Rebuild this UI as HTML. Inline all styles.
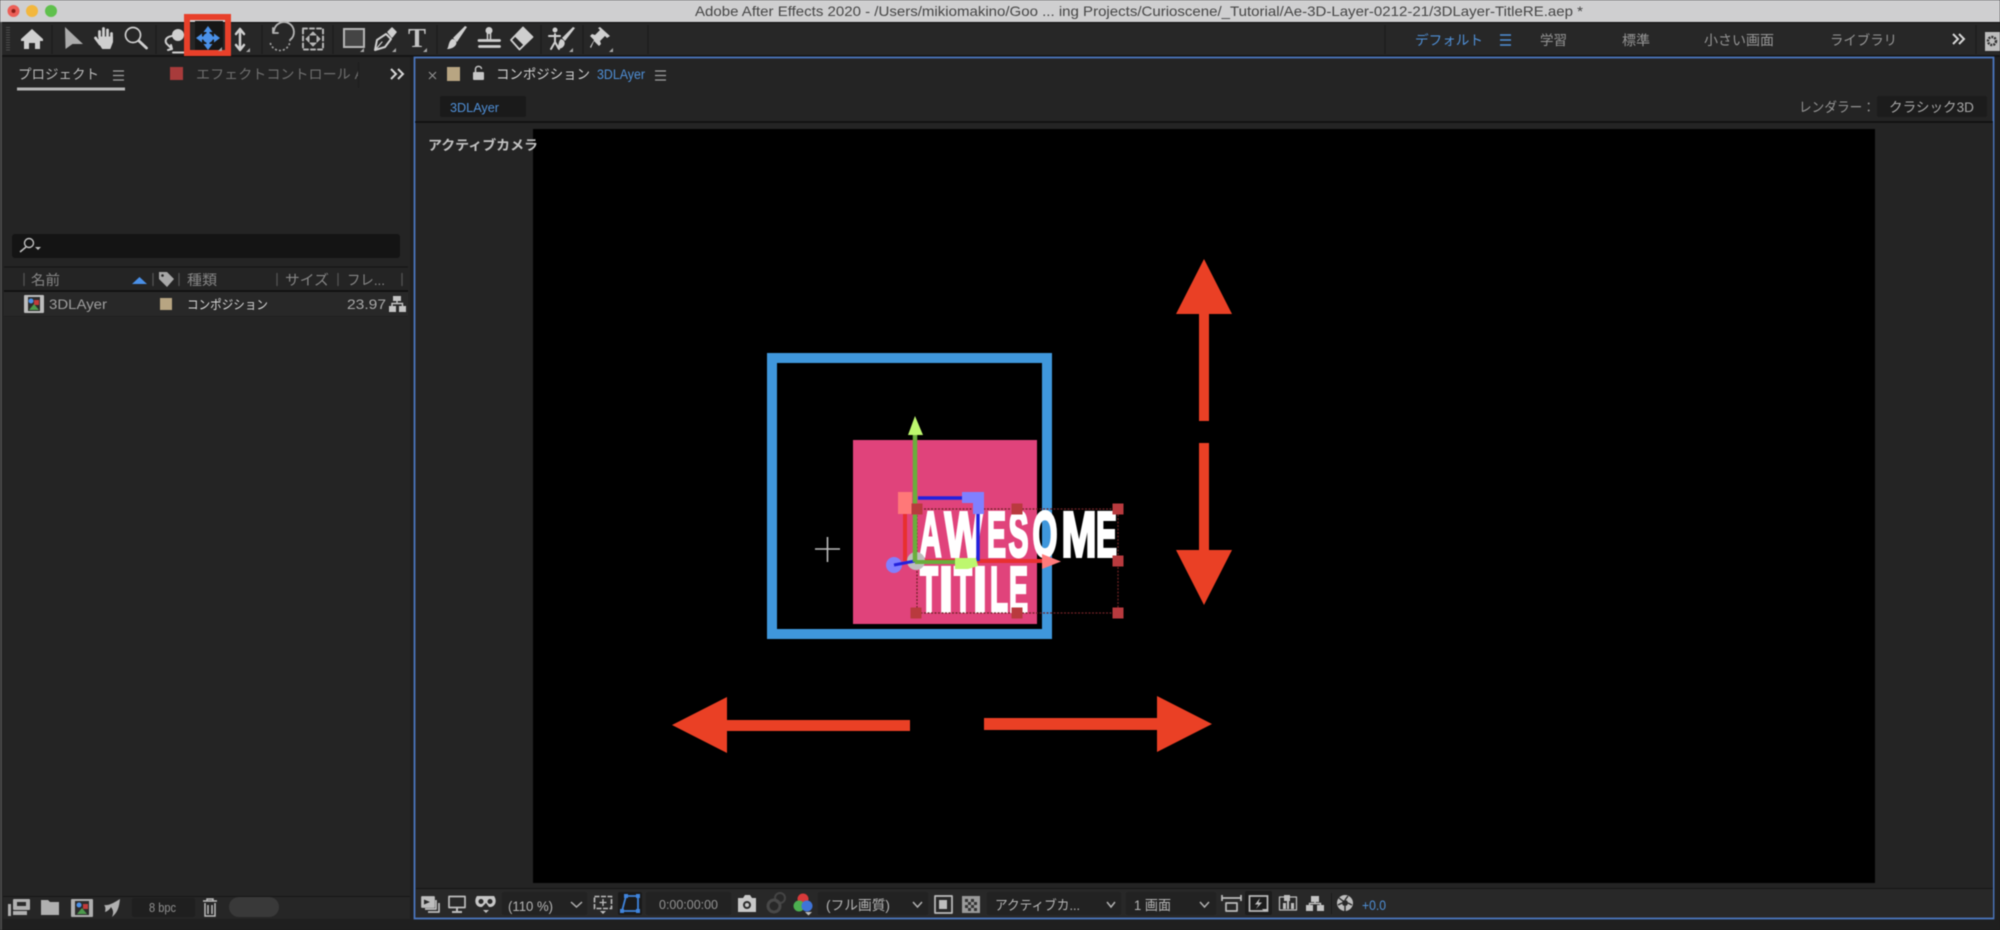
<!DOCTYPE html>
<html lang="ja"><head><meta charset="utf-8"><title>Adobe After Effects 2020</title>
<style>
html,body{margin:0;padding:0;background:#202020;width:2000px;height:930px;overflow:hidden}
svg{display:block;filter:blur(.55px)}
text{font-family:"Liberation Sans","Noto Sans CJK JP",sans-serif}
</style></head><body>
<svg xmlns="http://www.w3.org/2000/svg" width="2000" height="930" viewBox="0 0 2000 930">
<defs><clipPath id="efx"><rect x="190" y="60" width="168" height="30"/></clipPath></defs>
<!-- base -->
<rect width="2000" height="930" fill="#1f1f1f"/>
<!-- title bar -->
<rect width="2000" height="22" fill="#cfcfd0"/>
<rect y="22" width="2000" height="1.5" fill="#0c0c0c"/>
<circle cx="13.5" cy="11" r="6" fill="#ec5f57"/><circle cx="13.5" cy="11" r="2" fill="#8a1f18"/>
<circle cx="32" cy="11" r="6" fill="#f2b73d"/><circle cx="51" cy="11" r="6" fill="#5fc04c"/>
<text x="695" y="16" font-size="14" fill="#454545" textLength="888" lengthAdjust="spacingAndGlyphs">Adobe After Effects 2020 - /Users/mikiomakino/Goo ... ing Projects/Curioscene/_Tutorial/Ae-3D-Layer-0212-21/3DLayer-TitleRE.aep *</text>
<!-- toolbar -->
<rect y="23" width="2000" height="32" fill="#272727"/>
<rect y="55" width="2000" height="2" fill="#151515"/>
<rect x="0" y="22" width="2" height="908" fill="#4a4a4a"/>
<g stroke="#1c1c1c" stroke-width="1.2"><path d="M52 25V54M156 25V54M262 25V54M333 25V54M437 25V54M541 25V54M583 25V54M648 25V54M1385 25V54M1976 25V54"/></g>
<path d="M8 27V52" stroke="#4c4c4c" stroke-width="4" stroke-dasharray="1 1.5"/>
<!-- tool icons -->
<g fill="#cfcfcf" stroke="none">
<path d="M32 29L43 39V41H40V49H35V43H29V49H24V41H21V39Z"/>
<path d="M65 27L83 44H72.500L65.500 49Z" fill="#ababab"/>
<circle cx="178" cy="35" r="6"/>
<rect x="344" y="29" width="20" height="18" fill="#444" stroke="#b5b5b5" stroke-width="2"/>
</g>
<g fill="none" stroke="#cfcfcf" stroke-linecap="round" stroke-linejoin="round">
<g stroke-width="2.8"><path d="M99.500 37V31.500M103.500 36V28.500M107.500 37V30M111.500 40V33.500M100 44L95.500 38"/></g>
<path d="M99 37H112.500V42L110 48.500H102.500L99 43Z" fill="#cfcfcf" stroke-width="1"/>
<circle cx="133" cy="35" r="7.500" stroke-width="1.700"/><path d="M139 41L146.500 48" stroke-width="2.800"/>
<path d="M172 36C165 37 164 42 168 45L172 49M168 50L172 49L171 45" stroke-width="2"/><path d="M173 52.500H185" stroke-width="2"/>
<path d="M240 30V49M236 34L240 29L244 34M236 45L240 50L244 45" stroke-width="2.500"/>
<path d="M274 31A10 10 0 1 1 290 40" stroke-width="1.800" stroke="#b5b5b5"/><path d="M273 28V33H278" stroke-width="1.800" stroke="#b5b5b5"/>
<path d="M290 40A10 10 0 0 1 270 41" stroke-width="1.800" stroke-dasharray=".5 3.500" stroke="#a0a0a0"/>
<rect x="303" y="28.500" width="20" height="21" stroke-width="2" stroke-dasharray="4 3" stroke="#b5b5b5"/>
<path d="M313 32L310 35H316ZM313 46L310 43H316ZM306 39L309 36V42ZM320 39L317 36V42Z" stroke-width="1" stroke="#b5b5b5" fill="#b5b5b5"/>
<path d="M377 40L386 34L391 39L385 47L375 50Z" stroke-width="2"/><path d="M388 32L392 28L396 32L392 37Z" fill="#cfcfcf" stroke-width="1.500"/><path d="M376 49L382 42" stroke-width="1.200"/>
<path d="M479 40.500H499.500M479.500 46.500H499.500" stroke-width="2.800"/>
<path d="M487.500 32V39M490.500 32V39" stroke-width="1.500"/><circle cx="489" cy="30.500" r="3.500" fill="#cfcfcf" stroke="none"/>
<path d="M523 27.500L532.500 37L519.500 49.500L511 40Z" stroke-width="1.800"/><path d="M523 27.500L532.500 37L524 45L515 36Z" fill="#cfcfcf" stroke-width="1"/>
<circle cx="555" cy="30" r="2.500" fill="#cfcfcf" stroke="none"/><path d="M549 36H560M555 34V42L551 49M555 42L559 49" stroke-width="2"/>
</g>
<path d="M467 27L457 42L453 38L465 26Z" fill="#cfcfcf"/><path d="M452 39C456 39 458 43 455 46C452 49 448 49 447 49C449 47 448 42 452 39Z" fill="#cfcfcf"/>
<path d="M575 28L565 41L562 38L573 27Z" fill="#cfcfcf"/><path d="M561 39C565 40 566 44 563 47C561 49 558 49 557 48C559 46 558 41 561 39Z" fill="#cfcfcf"/>
<path d="M600 27L610 36L607 38L605 36L600 41L601 44L599 46L594 41L591 48L590 47L594 40L590 36L592 34L595 35L600 30L598 28Z" fill="#cfcfcf"/>
<text x="417" y="47" font-size="27" font-weight="bold" fill="#c4c4c4" text-anchor="middle" style="font-family:'Liberation Serif',serif">T</text>
<g fill="#a8a8a8"><path d="M250 52h-4l4-4zM364 52h-4l4-4zM396 52h-4l4-4zM427 52h-4l4-4zM573 52h-4l4-4zM613 52h-4l4-4z"/></g>
<!-- selected tool + red box -->
<rect x="195" y="21" width="28" height="32" fill="#171717"/>
<rect x="187" y="17" width="41" height="36" fill="none" stroke="#e8402a" stroke-width="6"/>
<g fill="#4a90e8"><path d="M208 26L212.500 32H203.500ZM208 50L212.500 44H203.500ZM196 38L202 33.500V42.500ZM220 38L214 33.500V42.500Z"/><circle cx="208" cy="38" r="5"/></g>
<path d="M208 30V46M200 38H216" stroke="#4a90e8" stroke-width="3"/>
<path d="M222 51h-4l4-4z" fill="#a8a8a8"/>
<!-- workspaces -->
<g font-size="13.600" fill="#959595">
<text x="1415" y="45" fill="#4f8fd6" textLength="68" lengthAdjust="spacingAndGlyphs">デフォルト</text>
<text x="1540" y="45" textLength="27" lengthAdjust="spacingAndGlyphs">学習</text>
<text x="1622" y="45" textLength="28" lengthAdjust="spacingAndGlyphs">標準</text>
<text x="1704" y="45" textLength="70" lengthAdjust="spacingAndGlyphs">小さい画面</text>
<text x="1830" y="45" textLength="67" lengthAdjust="spacingAndGlyphs">ライブラリ</text>
</g>
<path d="M1500 35H1511M1500 40H1511M1500 45H1511" stroke="#4f8fd6" stroke-width="1.400"/>
<path d="M1953 34L1958 39L1953 44M1959 34L1964 39L1959 44" fill="none" stroke="#d5d5d5" stroke-width="2"/>
<rect x="1985" y="32" width="15" height="19" fill="#bdbdbd"/><circle cx="1992" cy="41" r="4" fill="none" stroke="#333" stroke-width="2.500" stroke-dasharray="2 1"/>
<!-- left panel -->
<rect x="3" y="57" width="407" height="839" fill="#242424"/>
<text x="18" y="79" font-size="13.500" fill="#b8b8b8" textLength="81" lengthAdjust="spacingAndGlyphs">プロジェクト</text>
<path d="M113 71H124M113 75.500H124M113 80H124" stroke="#a0a0a0" stroke-width="1.300"/>
<rect x="17" y="87.500" width="108" height="3" fill="#b5b5b5"/>
<rect x="170" y="67" width="13" height="13" fill="#a83b3b"/>
<text x="196" y="79" font-size="13.500" fill="#6f6f6f" clip-path="url(#efx)" textLength="168" lengthAdjust="spacingAndGlyphs">エフェクトコントロール A</text>
<path d="M358.500 62V88" stroke="#1d1d1d"/>
<path d="M391 69L396 74L391 79M398 69L403 74L398 79" fill="none" stroke="#d5d5d5" stroke-width="2"/>
<rect x="12" y="234" width="388" height="24" rx="3" fill="#141414"/>
<circle cx="29" cy="243" r="4.500" fill="none" stroke="#c0c0c0" stroke-width="1.400"/><path d="M26 247L20 252" stroke="#c0c0c0" stroke-width="1.500"/><path d="M35 247h6l-3 3z" fill="#c0c0c0"/>
<path d="M4 267H408" stroke="#161616" stroke-width="1.200"/>
<path d="M4 291H408" stroke="#0d0d0d" stroke-width="1.500"/>
<path d="M4 316H408" stroke="#1b1b1b"/>
<rect x="4" y="292" width="404" height="24" fill="#282828"/>
<path d="M24 273V286M153 273V286M179 273V286M277 273V286M338 273V286M402 273V286" stroke="#555" stroke-width="1.200"/>
<g font-size="14" fill="#868686">
<text x="31" y="285" textLength="29" lengthAdjust="spacingAndGlyphs">名前</text>
<text x="187" y="285" textLength="30" lengthAdjust="spacingAndGlyphs">種類</text>
<text x="285" y="285" textLength="44" lengthAdjust="spacingAndGlyphs">サイズ</text>
<text x="347" y="285" textLength="38" lengthAdjust="spacingAndGlyphs">フレ...</text>
</g>
<path d="M132 284L139.500 277L147 284Z" fill="#4a90e8"/>
<path d="M159 272H167L174 279L167 287L159 279Z" fill="#a8a8a8"/><circle cx="162.500" cy="275.500" r="1.300" fill="#242424"/>
<rect x="24" y="295" width="20" height="18" rx="1" fill="#bdbdbd"/><rect x="28" y="297" width="12" height="14" fill="#2c2c2c"/><circle cx="31" cy="301" r="2.500" fill="#4a90e8"/><rect x="34" y="300" width="5" height="5" fill="#c23b3b"/><path d="M29 310L34 304L39 310Z" fill="#4c9a4c"/>
<text x="49" y="309" font-size="14" fill="#9f9f9f" textLength="58" lengthAdjust="spacingAndGlyphs">3DLAyer</text>
<rect x="160" y="298" width="12" height="12" fill="#b8a582"/>
<text x="187" y="309" font-size="12.500" fill="#dadada" textLength="81" lengthAdjust="spacingAndGlyphs">コンポジション</text>
<text x="347" y="309" font-size="14" fill="#a8a8a8" textLength="39" lengthAdjust="spacingAndGlyphs">23.97</text>
<g fill="#c4c4c4"><rect x="393" y="296" width="8" height="5"/><rect x="389" y="306" width="7" height="6"/><rect x="399" y="306" width="7" height="6"/></g><path d="M397 301V304M392 306V303.500H402.500V306" fill="none" stroke="#c4c4c4" stroke-width="1.400"/>
<!-- left bottom bar -->
<rect x="3" y="896" width="407" height="1" fill="#161616"/>
<rect x="3" y="897" width="407" height="22" fill="#262626"/>
<g fill="#b0b0b0"><rect x="13" y="899" width="17" height="11" rx="1"/><rect x="8" y="904" width="3" height="12"/><rect x="13" y="911" width="14" height="4"/><rect x="17" y="902" width="9" height="4" fill="#2a2a2a"/>
<path d="M41 900H48L50 902H59V915H41Z"/>
<rect x="71" y="899" width="22" height="18" rx="1"/></g>
<rect x="75" y="901" width="14" height="14" fill="#2c2c2c"/><circle cx="79" cy="905" r="2.500" fill="#4a90e8"/><rect x="83" y="904" width="5" height="5" fill="#c23b3b"/><path d="M77 914L82 908L87 914Z" fill="#4c9a4c"/>
<path d="M120 899C119 907 118 912 112 917C114 912 113 910 111 907C110 909 108 911 105 912C106 908 105 906 104 905C109 906 115 902 120 899Z" fill="#b0b0b0"/>
<rect x="132" y="898" width="63" height="19" rx="2" fill="#1f1f1f"/>
<text x="149" y="912" font-size="12.500" fill="#8f8f8f" textLength="27" lengthAdjust="spacingAndGlyphs">8 bpc</text>
<path d="M203 901H217M207 901V899H213V901M205 903V916H215V903M208 905V914M212 905V914" fill="none" stroke="#bcbcbc" stroke-width="1.500"/>
<rect x="229" y="897" width="50" height="20" rx="10" fill="#393939"/>
<!-- comp panel -->
<rect x="414.500" y="57.500" width="1579" height="861" fill="#242424" stroke="#4b76bd" stroke-width="1.800"/>
<rect x="416" y="123" width="1577" height="766" fill="#242424"/>
<path d="M415 122H1993" stroke="#0e0e0e" stroke-width="1.500"/>
<path d="M429 72L436 79M436 72L429 79" stroke="#8f8f8f" stroke-width="1.200"/>
<rect x="447" y="67" width="13" height="14" fill="#b8a582"/>
<rect x="473" y="72" width="11" height="8" rx="1" fill="#c6c6c6"/><path d="M475.500 72V69C475.500 65.500 481.500 65.500 481.500 69" fill="none" stroke="#c6c6c6" stroke-width="1.500"/>
<text x="496" y="79" font-size="13.500" fill="#d2d2d2" textLength="94" lengthAdjust="spacingAndGlyphs">コンポジション</text>
<text x="597" y="79" font-size="13.500" fill="#4f8fd6" textLength="48" lengthAdjust="spacingAndGlyphs">3DLAyer</text>
<path d="M655 71H666M655 75.500H666M655 80H666" stroke="#a0a0a0" stroke-width="1.300"/>
<rect x="440" y="96" width="86" height="21" rx="2" fill="#1a1a1a"/>
<text x="450" y="112" font-size="13" fill="#4f8fd6" textLength="49" lengthAdjust="spacingAndGlyphs">3DLAyer</text>
<text x="1799" y="112" font-size="13.500" fill="#939393" textLength="76" lengthAdjust="spacingAndGlyphs">レンダラー：</text>
<rect x="1877" y="96" width="110" height="21" rx="2" fill="#1c1c1c"/>
<text x="1889" y="112" font-size="13.500" fill="#a8a8a8" textLength="85" lengthAdjust="spacingAndGlyphs">クラシック3D</text>
<!-- viewer -->
<rect x="533" y="129" width="1342" height="754" fill="#000"/>
<text x="428" y="150" font-size="13.500" font-weight="bold" fill="#c2c2c2" textLength="110" lengthAdjust="spacingAndGlyphs">アクティブカメラ</text>
<!-- artwork -->
<rect x="772" y="358" width="275" height="276" fill="none" stroke="#3f97dc" stroke-width="10"/>
<rect x="853" y="440" width="184" height="184" fill="#e0437b"/>
<path d="M815 549H840M827.500 537V562" stroke="#bdbdbd" stroke-width="1.600"/>
<g fill="#fff" stroke="#fff" stroke-width="3" font-weight="bold" font-size="64">
<text x="919.500" y="556.500" textLength="22" lengthAdjust="spacingAndGlyphs">A</text>
<text x="944.500" y="556.500" textLength="38" lengthAdjust="spacingAndGlyphs">W</text>
<text x="987" y="556.500" textLength="19" lengthAdjust="spacingAndGlyphs">E</text>
<text x="1008.500" y="556.500" textLength="20" lengthAdjust="spacingAndGlyphs">S</text>
<text x="1032.500" y="556.500" textLength="25" lengthAdjust="spacingAndGlyphs">O</text>
<text x="1061.500" y="556.500" textLength="35" lengthAdjust="spacingAndGlyphs">M</text>
<text x="1096" y="556.500" textLength="21" lengthAdjust="spacingAndGlyphs">E</text>
<text x="920" y="611.500" textLength="18" lengthAdjust="spacingAndGlyphs">T</text>
<text x="939" y="611.500" textLength="14" lengthAdjust="spacingAndGlyphs">I</text>
<text x="954" y="611.500" textLength="18" lengthAdjust="spacingAndGlyphs">T</text>
<text x="973" y="611.500" textLength="14" lengthAdjust="spacingAndGlyphs">I</text>
<text x="990" y="611.500" textLength="18" lengthAdjust="spacingAndGlyphs">L</text>
<text x="1009" y="611.500" textLength="19" lengthAdjust="spacingAndGlyphs">E</text>
</g>
<!-- selection bounds -->
<rect x="917" y="509" width="201" height="104" fill="none" stroke="#6e2224" stroke-width="1.200" stroke-dasharray="2 1.500"/>
<!-- gizmo -->
<path d="M905 513V561" stroke="#e8302f" stroke-width="4"/>
<path d="M915 561H1042" stroke="#e8302f" stroke-width="4"/>
<path d="M918 498H962" stroke="#2222dd" stroke-width="3.500"/>
<path d="M978 514V561" stroke="#2222dd" stroke-width="3.500"/>
<rect x="898" y="492" width="14" height="22" fill="#ff7878"/>
<path d="M962 492H984V514H973V503H962Z" fill="#8080ff"/>
<path d="M1042 554L1061 561.500L1042 569Z" fill="#ff7b7b"/>
<circle cx="916" cy="561" r="9" fill="#bdbdbd"/>
<circle cx="894" cy="565" r="8" fill="#8080ff"/>
<path d="M894 565L915 561" stroke="#2222dd" stroke-width="3"/>
<path d="M915 435V562" stroke="#6aae3c" stroke-width="4.500"/>
<path d="M915 562H955" stroke="#6aae3c" stroke-width="4"/>
<path d="M915 416L923 435H908Z" fill="#bdf76e"/>
<path d="M955 558H976L978 566L968 569H955Z" fill="#bdf76e"/>
<g fill="#b93a3e"><rect x="911.500" y="503.500" width="11" height="11"/><rect x="1011.500" y="503.500" width="11" height="11"/><rect x="1112.500" y="503.500" width="11" height="11"/><rect x="1112.500" y="555.500" width="11" height="11"/><rect x="1112.500" y="607.500" width="11" height="11"/><rect x="1011.500" y="607.500" width="11" height="11"/><rect x="910.500" y="607.500" width="11" height="11"/></g>
<!-- red arrows -->
<g fill="#ea4025">
<path d="M1204 259L1232 314H1209V421H1199V314H1176Z"/>
<path d="M1199 443H1209V550H1232L1204 605L1176 550H1199Z"/>
<path d="M672 725L727 697V720H910V731H727V753Z"/>
<path d="M984 718H1157V696L1212 724L1157 752V730H984Z"/>
</g>
<!-- comp bottom bar -->
<path d="M416 888.500H1993" stroke="#141414"/>
<rect x="416" y="889" width="1577" height="28.500" fill="#282828"/>
<g fill="none" stroke="#bdbdbd" stroke-width="1.700" stroke-linejoin="round">
<rect x="422" y="897" width="12" height="10" fill="#bdbdbd"/><path d="M436 900V909H425M439 903V912H428"/>
<rect x="449" y="896.500" width="16" height="11"/><path d="M457 908V911M452 912H462" stroke-width="2"/>
<path d="M1222 898H1241M1222 895V901M1241 895V901"/><rect x="1226" y="903" width="11" height="8"/>
<rect x="935" y="896" width="17" height="17"/>
<rect x="1279.500" y="897" width="17" height="13" stroke-width="1.300"/>
</g>
<rect x="594.500" y="896.500" width="17" height="12" fill="none" stroke="#bdbdbd" stroke-width="1.600" stroke-dasharray="5 1.500"/>
<path d="M603 899V906M599.500 902.500H606.500" stroke="#bdbdbd" stroke-width="1.300"/>
<path d="M424 899.500L430 902L424 904.500Z" fill="#282828"/>
<path d="M477 896H494C497 900 496 906 491 907H489L486 903L482 907H480C475 906 474 900 477 896Z" fill="#c6c6c6"/><circle cx="481" cy="901.500" r="2.500" fill="#282828"/><circle cx="490" cy="901.500" r="2.500" fill="#282828"/>
<path d="M483 910h6l-3 3zM606 911h-6l3 3z" fill="#bdbdbd"/>
<rect x="502" y="892" width="85" height="23" rx="2" fill="#222"/>
<text x="508" y="911" font-size="14" fill="#b5b5b5" textLength="45" lengthAdjust="spacingAndGlyphs">(110 %)</text>
<rect x="618" y="892" width="24" height="23" rx="2" fill="#1a1a1a"/>
<path d="M626 896H638V911H622Z" fill="none" stroke="#3f84dc" stroke-width="1.800"/><g fill="#3f84dc"><rect x="624" y="894" width="4" height="4"/><rect x="636" y="894" width="4" height="4"/><rect x="636" y="909" width="4" height="4"/><rect x="620" y="909" width="4" height="4"/></g>
<rect x="646" y="892" width="85" height="23" rx="2" fill="#222"/>
<text x="659" y="909" font-size="12.500" fill="#939393" textLength="59" lengthAdjust="spacingAndGlyphs">0:00:00:00</text>
<path d="M738 898H743L745 895H750L752 898H756V912H738Z" fill="#c8c8c8"/><circle cx="747" cy="905" r="4" fill="#2a2a2a"/><circle cx="747" cy="905" r="2" fill="#c8c8c8"/>
<circle cx="780" cy="898" r="5" fill="none" stroke="#444" stroke-width="2"/><circle cx="774" cy="906" r="6" fill="none" stroke="#484848" stroke-width="3"/>
<circle cx="803" cy="899" r="5.500" fill="#d83a3a"/><circle cx="799" cy="906" r="5.500" fill="#4caf50"/><circle cx="807" cy="906" r="5.500" fill="#3f74d8"/><path d="M805 912h7l-3.500 3.500z" fill="#bdbdbd"/>
<rect x="818" y="892" width="110" height="23" rx="2" fill="#222"/>
<text x="826" y="910" font-size="13.500" fill="#b5b5b5" textLength="64" lengthAdjust="spacingAndGlyphs">(フル画質)</text>
<rect x="939" y="900" width="8" height="9" fill="#bdbdbd"/>
<rect x="962" y="896" width="18" height="17" fill="#9a9a9a"/><path d="M965 899H968V902H965ZM971 899H974V902H971ZM968 902H971V905H968ZM974 902H977V905H974ZM965 905H968V908H965ZM971 905H974V908H971ZM968 908H971V911H968ZM974 908H977V911H974Z" fill="#333"/>
<rect x="987" y="892" width="134" height="23" rx="2" fill="#222"/>
<text x="995" y="910" font-size="13.500" fill="#b5b5b5" textLength="85" lengthAdjust="spacingAndGlyphs">アクティブカ...</text>
<rect x="1126" y="892" width="90" height="23" rx="2" fill="#222"/>
<text x="1134" y="910" font-size="13.500" fill="#b5b5b5" textLength="37" lengthAdjust="spacingAndGlyphs">1 画面</text>
<path d="M571 902L576.500 907L582 902M913 902L917.500 907L922 902M1107 902L1111 907L1115 902M1200 902L1204.500 907L1209 902" fill="none" stroke="#b0b0b0" stroke-width="1.500"/>
<rect x="1245" y="891" width="27" height="24" rx="2" fill="#1c1c1c"/>
<rect x="1249.500" y="896" width="18" height="15" fill="none" stroke="#bdbdbd" stroke-width="1.700"/><path d="M1260 898L1255 904.500H1258.500L1256 909L1262 902.500H1258.500Z" fill="#bdbdbd"/><path d="M1262 909h6l-3 3z" fill="#bdbdbd"/>
<path d="M1284 895h6v6h-6zM1283 903h3v6h-3zM1287 900h2v9h-2zM1291 903h3v6h-3z" fill="#bdbdbd"/>
<g fill="#c4c4c4"><rect x="1311" y="896" width="8" height="6"/><rect x="1306" y="905" width="7" height="6"/><rect x="1317" y="905" width="7" height="6"/></g><path d="M1315 902V904M1309.500 905V903.500H1320.500V905" fill="none" stroke="#c4c4c4" stroke-width="1.400"/>
<circle cx="1345" cy="903" r="8" fill="#bdbdbd"/><circle cx="1345" cy="903" r="3" fill="#282828"/>
<path d="M1348 896L1345 900M1352 905L1348 903M1345 911L1345 906M1338 905L1342 903M1339 898L1343 901" stroke="#282828" stroke-width="1.400"/>
<path d="M1331.500 893V914" stroke="#1b1b1b"/>
<text x="1362" y="910" font-size="13.500" fill="#4f8fd6" textLength="24" lengthAdjust="spacingAndGlyphs">+0.0</text>
</svg>
</body></html>
